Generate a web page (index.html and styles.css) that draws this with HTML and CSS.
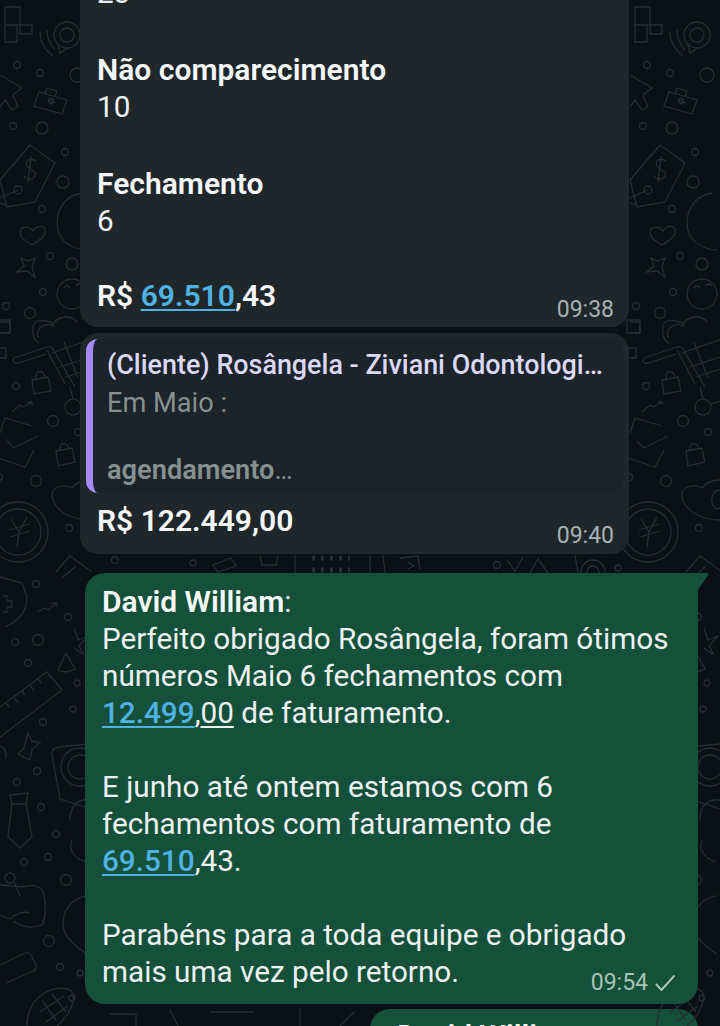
FILE: index.html
```html
<!DOCTYPE html>
<html>
<head>
  <title>Chat</title>
  <link rel="stylesheet" href="styles.css">
</head>
<body>
  <div class="chat">
    <svg class="wallpaper" width="720" height="1026" viewBox="0 0 720 1026" fill="none" stroke="#272d31" stroke-width="1.3">
      <defs>
        <g id="tile">
          <!-- squares + speech bubble -->
          <path d="M5 7h15v18h12v9h-12v-9h-15zM5 25v17h12v-17M0 322h10v11h-10"/>
          <circle cx="67" cy="35" r="13"/><circle cx="67" cy="35" r="7"/>
          <path d="M58 45l2 8 8-5M40 32q0 14 13 24M47 30q0 11 8 20"/>
          <circle cx="17" cy="65" r="3.5"/><circle cx="40" cy="73" r="3.5"/><circle cx="77" cy="75" r="7"/>
          <path d="M0 75l22 13-9 7 5 12-6 3-7-10-5 7"/>
          <path d="M39 92l28 8-5 14-28-8zM45 94l2-6 10 3-2 6M48 100l8 3"/><circle cx="51" cy="101" r="2.5"/>
          <circle cx="13" cy="126" r="3.5"/><circle cx="42" cy="128" r="6"/>
          <!-- price tag -->
          <path d="M30 145l25 18-20 39-28 5-7-27z"/><path d="M36 161c-6-4-12 0-9 5s11 5 8 10-9 3-11 0M31 156l-3 26"/><circle cx="18" cy="190" r="4"/>
          <path d="M18 190l-18 8M0 203l7 2"/>
          <circle cx="65" cy="152" r="3.5"/><circle cx="63" cy="182" r="6"/><circle cx="42" cy="209" r="3.5"/>
          <path d="M82 193c-16 2-25 16-25 30s10 26 30 27"/>
          <path d="M33 231c5-7 13-6 12 2-1 5-8 9-13 12-6-3-12-7-12-13 0-5 9-7 13-1z"/>
          <path d="M35 258l-3 9 3 10-8-6-10 1 7-6-3-8 7 3z"/>
          <circle cx="50" cy="256" r="3.5"/><circle cx="72" cy="264" r="6"/>
          <circle cx="43" cy="292" r="3.5"/><circle cx="6" cy="306" r="3.5"/><circle cx="30" cy="313" r="5.5"/>
          <circle cx="72" cy="294" r="15"/><path d="M64 288q3-4 6 0M76 286q3-4 6 0"/>
          <path d="M38 338c-3-12 10-16 15-12 2-10 18-12 24-4"/>
          <!-- shopping cart -->
          <path d="M14 358l33-11c3-1 5 0 6 2l22 38M14 358c-2 4 0 6 4 5l28-9M52 353l40-14M60 367l30-10M66 377l24-8M64 342l14 36M47 350l18 34"/>
          <path d="M35 322c-4 6-3 18 4 21M35 322c5-2 14-2 18 2"/>
          <path d="M70 387l3 12"/><circle cx="73" cy="407" r="8"/><path d="M81 404l12-4"/>
          <path d="M-3 320h13v13h-13zM-3 348h9v10h-9z"/>
          <circle cx="16" cy="386" r="3.5"/>
          <!-- padlocks -->
          <path d="M32 380l16-3 3 14-17 3zM36 379c-2-9 8-10 9-2"/>
          <path d="M56 451l16-3 3 14-17 4zM60 451c-2-9 8-10 9-2"/>
          <path d="M12 412l8-7 3 2 9-5M32 402l-4 0M32 402l0 3"/>
          <circle cx="53" cy="421" r="5.5"/><circle cx="78" cy="432" r="3.5"/>
          <!-- envelope with tick -->
          <path d="M0 433l5-15 27 8M7 441l7 7 24-12M-5 457l30 10 9-17"/>
          <circle cx="36" cy="481" r="5.5"/><circle cx="-1" cy="477" r="3.5"/>
          <!-- cloud -->
          <path d="M90 520c-16 0-36-8-38-24-1-10 12-12 20-8 6-8 16-8 18-8M90 490c-6 0-9 6-8 12s6 8 8 6"/>
          <circle cx="69" cy="528" r="3.5"/>
          <!-- yen coin -->
          <circle cx="18" cy="532" r="30"/><circle cx="18" cy="532" r="23"/>
          <path d="M11 519l8 13 8-15M19 532l-2 15M9 530l20-6M10 537l20-6"/>
          <path d="M56 572l14-16 22 16M62 578l14-12"/>
          <!-- shield, chart, sparkle -->
          <path d="M0 577l22 6 5 14c0 14-8 24-22 30M3 596h4v5h5v6h-5v5h-4"/>
          <circle cx="36" cy="584" r="3.5"/><path d="M37 612l8-4 3 2 9-7M52 603h5v4"/>
          <circle cx="68" cy="617" r="3.5"/><circle cx="15" cy="642" r="3.5"/><circle cx="38" cy="640" r="5.5"/><circle cx="28" cy="663" r="3.5"/>
          <path d="M74 628l4 12 10-4-9 10 5 9-10-7M58 670l8-17 9 16c-5 3-12 4-17 1z"/>
          <!-- ruler -->
          <path d="M0 707l47-35 15 18-62 47M38 679l3 4M30 685l4 6M22 691l3 4M14 697l4 6M6 703l3 4"/>
          <circle cx="77" cy="683" r="3"/><circle cx="73" cy="709" r="3"/><circle cx="43" cy="722" r="3.5"/>
          <path d="M28 733l4 8 8 2-8 6-2 11-12-6 6-6 2-8z"/>
          <path d="M0 746a9 9 0 0 1 5 13"/>
          <!-- card with rings -->
          <path d="M90 744l-32 3c-5 1-7 4-6 8l8 44 30 10"/><circle cx="80" cy="767" r="12"/><circle cx="80" cy="767" r="19"/>
          <circle cx="37" cy="771" r="3.5"/><circle cx="17" cy="782" r="3.5"/>
          <!-- tie -->
          <path d="M10 795l18-2-2 10 6 34-12 11-12-11 4-34zM12 804h14"/>
          <circle cx="41" cy="807" r="3.5"/><circle cx="56" cy="834" r="3.5"/><circle cx="48" cy="857" r="3.5"/><circle cx="24" cy="862" r="3.5"/>
          <path d="M90 800c-14-2-20 8-20 20M72 840c-4 10 2 18 14 22"/><circle cx="66" cy="880" r="5.5"/>
          <!-- gift bag -->
          <path d="M0 885l24 2c10-4 18 0 20 8 2 12 2 22-2 30-10 4-22 2-28-4M0 915l10 4c6-6 14-8 20-6"/><circle cx="10" cy="878" r="5"/><path d="M14 882l6 14"/>
          <path d="M86 896c-14 2-23 14-23 28 0 10 8 20 24 30"/>
          <circle cx="49" cy="941" r="5.5"/><circle cx="60" cy="967" r="3.5"/><circle cx="80" cy="973" r="3"/><circle cx="72" cy="998" r="3"/>
          <!-- bottle -->
          <path d="M0 965l25-12c3-1 5 0 6 2l5 10c1 3 0 5-3 6l-27 12"/>
          <!-- corn -->
          <path d="M27 1026c0-18 10-32 24-36 8-3 20-3 22 4 2 10-6 24-16 32M42 1000l14 20M52 994l14 18M40 1012l24-16M46 1022l22-16"/>
        </g>
      </defs>
      <use href="#tile"/>
      <use href="#tile" x="630"/>

      <!-- strip between the bubbles -->
      <circle cx="115" cy="560" r="3.5"/><circle cx="193" cy="563" r="3"/>
      <path d="M213 565l18-7 5 8-18 6zM260 556l2 9h14l2-9M295 555v18M370 555v18M383 555l2 18"/>
      <path d="M312 558h38M312 570h38" stroke-dasharray="3 6" stroke-width="5"/>
      <path d="M400 558l18-2 2 14M408 562l6 4-6 3"/>
      <circle cx="497" cy="565" r="3.5"/><path d="M507 560l8 11 8-14M530 573l8-14 10 14M575 555l3 18"/>
      <circle cx="593" cy="572" r="12"/><circle cx="593" cy="572" r="6"/><circle cx="618" cy="568" r="3"/>
      <path d="M110 1014h26v12M170 1010l8 16M210 1012h44M300 1008v18M340 1026l14-14"/>
    </svg>

    <div class="msg msg-in msg-first">
      <p class="cut">23</p>
      <p class="gap-wide"><b>Não comparecimento</b><br>10</p>
      <p class="gap-wide"><b>Fechamento</b><br>6</p>
      <p class="gap-last"><b>R$ <a>69.510</a>,43</b></p>
      <span class="time">09:38</span>
    </div>

    <div class="msg msg-in msg-second">
      <div class="quote">
        <div class="quote-name">(Cliente) Rosângela - Ziviani Odontologi…</div>
        <div class="quote-text">Em Maio :</div>
        <div class="quote-text quote-blank">&nbsp;</div>
        <div class="quote-text"><b>agendamento</b>…</div>
      </div>
      <p class="total"><b>R$ 122.449,00</b></p>
      <span class="time">09:40</span>
    </div>

    <div class="msg msg-out">
      <svg class="tail" width="14" height="20" viewBox="0 0 14 20"><path d="M0 0h11q2 0 1 2L0 20z" fill="#14503a"/></svg>
      <p><b class="sender">David William</b>:<br>
      Perfeito obrigado Rosângela, foram ótimos<br>
      números Maio 6 fechamentos com<br>
      <a>12.499</a>,<u>00</u> de faturamento.</p>
      <p class="gap">E junho até ontem estamos com 6<br>
      fechamentos com faturamento de<br>
      <a>69.510</a>,43.</p>
      <p class="gap">Parabéns para a toda equipe e obrigado<br>
      mais uma vez pelo retorno.</p>
      <span class="time">09:54
        <svg class="tick" width="22" height="18" viewBox="0 0 22 18" fill="none" stroke="#a5c4b6" stroke-width="2"><path d="M2 10l5.500 6L20.500 1.500"/></svg>
      </span>
    </div>

    <div class="msg-out msg-next"><b>David William</b></div>
  </div>
</body>
</html>
```

FILE: styles.css
```css
body {
  margin: 0;
  background-color: #0b1014;
  font-family: Roboto, sans-serif;
  font-size: 29.7px;
  line-height: 37px;
  color: #eef1f2;
}

.chat {
  position: relative;
  width: 720px;
  height: 1026px;
  overflow: hidden;
  display: flex;
  flex-direction: column;
}

.wallpaper {
  position: absolute;
  top: 0;
  left: 0;
}

p {
  margin: 0;
}

b {
  font-size: 30px;
  font-weight: 600;
  color: #f5f7f8;
}

a {
  color: #4fb2e0;
  font-weight: 500;
  text-decoration: underline;
  text-decoration-thickness: 2px;
  text-underline-offset: 3px;
}

b a {
  font-weight: 600;
}

u {
  text-underline-offset: 3px;
}

.gap {
  margin-top: 37px;
}

.gap-wide {
  margin-top: 40px;
}

.gap-last {
  margin-top: 38px;
}

.msg {
  position: relative;
  box-sizing: border-box;
  flex: none;
}

.msg-in {
  width: 549px;
  margin-left: 80px;
  background-color: #20272b;
  border-radius: 18px;
  padding-left: 17px;
}

.msg-first {
  height: 345px;
  margin-top: -18px;
  border-radius: 0 0 18px 18px;
}

.cut {
  margin-top: -8px;
}

.msg-first .time {
  bottom: 2px;
}

.msg-second {
  height: 221px;
  margin-top: 6px;
  padding: 6px 6px 0;
}

.msg-second .time {
  bottom: 3px;
}

.quote {
  box-sizing: border-box;
  height: 154px;
  padding: 9px 12px 0 14px;
  background-color: #1c2329;
  border-radius: 12px;
  overflow: hidden;
  border-left: 7px solid #a48bf3;
}

.quote-name {
  font-size: 26.9px;
  font-weight: 500;
  line-height: 34px;
  margin-bottom: 4px;
  color: #dcd8f8;
  white-space: nowrap;
}

.quote-text {
  font-size: 27.2px;
  line-height: 34px;
  color: #87908f;
}

.quote-blank {
  height: 33px;
}

.quote-text b {
  font-size: 27.2px;
  color: #87908f;
}

.total {
  margin: 9px 0 0 11px;
}

.time {
  position: absolute;
  right: 15px;
  bottom: 4px;
  font-size: 23px;
  line-height: 30px;
  color: #a9b0b2;
}

.msg-out {
  box-sizing: border-box;
  flex: none;
  background-color: #14503a;
}

.msg.msg-out {
  width: 613px;
  height: 431px;
  margin: 19px 0 0 85px;
  padding: 10px 0 0 17px;
  border-radius: 20px 0 20px 20px;
}

.msg-out .time {
  right: 22px;
  bottom: 6px;
  color: #a5c4b6;
  display: flex;
  align-items: center;
  gap: 6px;
}

.tail {
  position: absolute;
  top: 0;
  left: 611px;
}

.msg-next {
  width: 328px;
  height: 40px;
  margin: 5px 0 0 370px;
  padding: 8px 0 0 27px;
  border-radius: 20px 20px 0 0;
}
```
